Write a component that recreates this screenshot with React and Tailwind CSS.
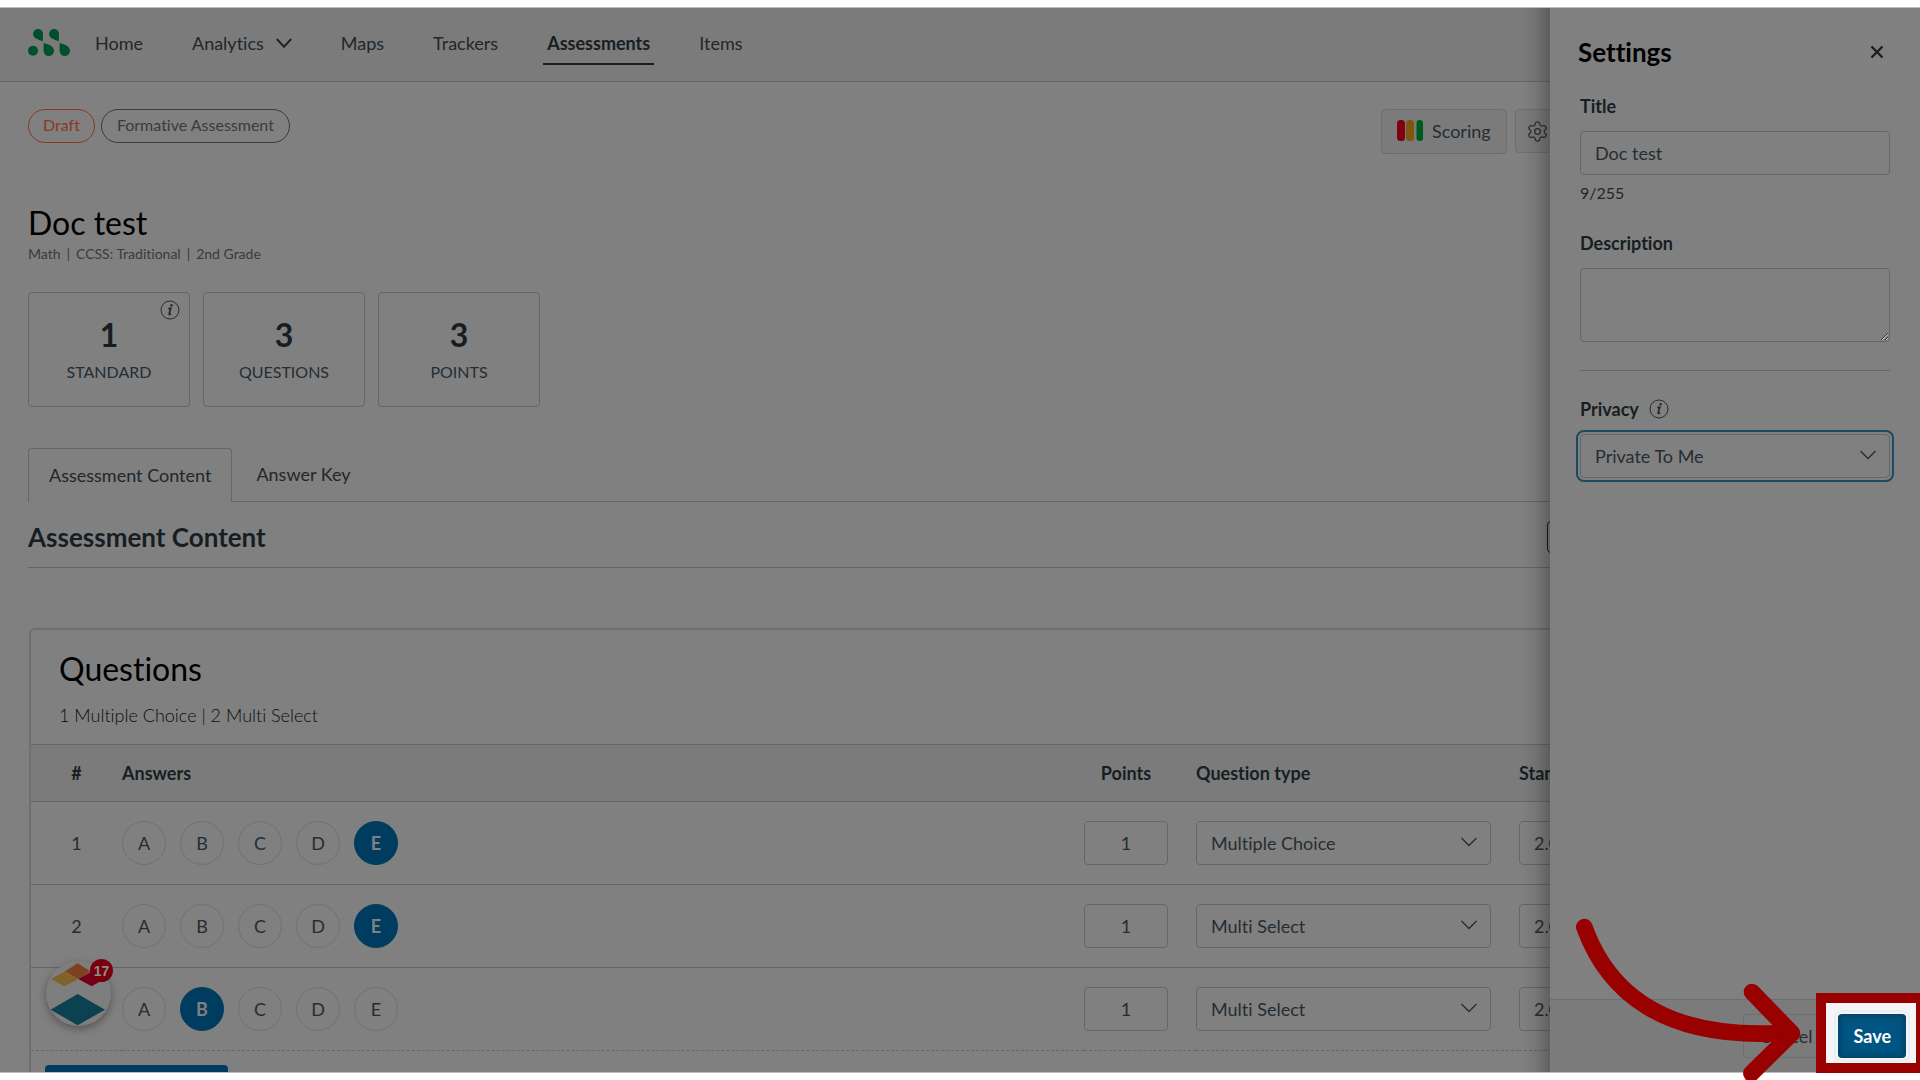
import React from 'react';
import { Settings as Gear } from 'lucide-react';

const questions = [
  { id: 1, type: 'Multiple Choice', answer: 'E' },
  { id: 2, type: 'Multi Select', answer: 'E' },
  { id: 3, type: 'Multi Select', answer: 'B' },
];

const stats = [
  { value: 1, label: 'STANDARD', info: true },
  { value: 3, label: 'QUESTIONS' },
  { value: 3, label: 'POINTS' },
];

// Drops arranged in two rows, the last one on the left is round
const Logo = () => (
  <svg viewBox="0 0 42 27" className="w-[42px] h-[27px]" fill="#00502c">
    <path d="M15 12.200C11 11 5 9.500 5 5a5 5 0 0 1 10 0z" />
    <path d="M31 12.200C27 11 21 9.500 21 5a5 5 0 0 1 10 0z" />
    <circle cx="5" cy="21.800" r="5" />
    <path d="M15.600 13.800C20 15.500 26 17 26 21.800a5.200 5.200 0 0 1-10.400 0z" />
    <path d="M31.600 13.800C36 15.500 42 17 42 21.800a5.200 5.200 0 0 1-10.400 0z" />
  </svg>
);

const InfoIcon = () => (
  <svg viewBox="0 0 20 20" className="size-5" fill="none" stroke="#252d33">
    <circle cx="10" cy="10" r="9" strokeWidth="1" />
    <path d="M8.300 8.600 10.700 8.100 9.100 14.200Q9.200 15 11 13.600" strokeWidth="1.800" />
    <circle cx="11.600" cy="5.200" r="1.300" fill="#252d33" stroke="none" />
  </svg>
);

const SelectBox = ({ id, label, value, focused }) => (
  <div className="relative">
    <select
      id={id}
      aria-label={label}
      defaultValue={value}
      className={`block w-full h-11 appearance-none rounded border border-[#646769] bg-transparent pl-3.5 pr-10 text-lg text-[#252d33] ${
        focused ? 'outline-2 outline-offset-2 outline-[#1d4a62]' : ''
      }`}
    >
      <option>{value}</option>
    </select>
    <svg
      viewBox="0 0 16 10"
      className="absolute right-3.5 top-4 w-4 h-2.5 pointer-events-none"
      fill="none"
      stroke="#252d33"
      strokeWidth="1.300"
    >
      <path d="M0.500 1 8 8.500 15.500 1" />
    </svg>
  </div>
);

const TopNav = () => (
  <header className="flex items-center h-[74px] pl-7 pb-1 border-b border-[#646769] bg-[#7b7b7b] text-lg text-[#20272c]">
    <a href="#" aria-label="Main page">
      <Logo />
    </a>
    <nav className="flex items-center ml-[25px] gap-[49px] whitespace-nowrap">
      <a href="#">Home</a>
      <a href="#" className="flex items-center gap-3">
        Analytics
        <svg viewBox="0 0 16 10" className="w-4 h-2.5" fill="none" stroke="#20272c" strokeWidth="2">
          <path d="M0.800 1 8 8.800 15.200 1" />
        </svg>
      </a>
      <a href="#">Maps</a>
      <a href="#">Trackers</a>
      <a href="#" className="relative font-bold text-[#171e23]">
        Assessments
        <span className="absolute -inset-x-1 -bottom-2 h-0.5 bg-[#171e23]" />
      </a>
      <a href="#">Items</a>
    </nav>
  </header>
);

const AnswerChoices = ({ question }) => (
  <div className="flex gap-3.5">
    {['A', 'B', 'C', 'D', 'E'].map((letter) => (
      <button
        key={letter}
        className={`size-11 rounded-full border text-lg ${
          letter === question.answer
            ? 'bg-[#003c5f] border-[#003c5f] text-[#808080] font-bold'
            : 'border-[#6f7173] text-[#252d33]'
        }`}
      >
        {letter}
      </button>
    ))}
  </div>
);

const QuestionsPanel = () => (
  <section className="mt-[60px] mx-px border-2 border-[#6d6f70] rounded-t-md">
    <div className="pt-[19px] pl-7 pb-[17px]">
      <h3 className="text-[32px] leading-10 text-black">Questions</h3>
      <p className="mt-3.5 text-lg leading-6 font-light text-[#0c0c0c]">1 Multiple Choice | 2 Multi Select</p>
    </div>
    <table className="w-full table-fixed text-lg text-[#252d33]">
      <thead>
        <tr className="h-[57px] bg-[#7b7b7b] border-y border-[#646769] text-left text-[#171e23]">
          <th className="w-[91px] text-center">#</th>
          <th>Answers</th>
          <th className="w-28 pr-7 text-center">Points</th>
          <th className="w-[323px]">Question type</th>
          <th className="w-[370px]">Standards</th>
        </tr>
      </thead>
      <tbody>
        {questions.map((q) => (
          <tr key={q.id} className="h-[83px] border-b border-[#646769] last:border-dashed">
            <td className="text-center">{q.id}</td>
            <td>
              <AnswerChoices question={q} />
            </td>
            <td className="pr-7">
              <input
                aria-label={`Points for question ${q.id}`}
                defaultValue="1"
                className="block w-full h-11 rounded border border-[#646769] text-center"
              />
            </td>
            <td className="pr-7">
              <SelectBox label={`Type of question ${q.id}`} value={q.type} />
            </td>
            <td className="pr-7">
              <input
                aria-label={`Standard for question ${q.id}`}
                defaultValue="2.OA.A.1"
                className="block w-full h-11 rounded border border-[#646769] px-3.5"
              />
            </td>
          </tr>
        ))}
      </tbody>
    </table>
    <button aria-label="Add questions" className="block mt-3.5 ml-3.5 w-[183px] h-11 rounded bg-[#003c5f]" />
  </section>
);

const AssessmentPage = () => (
  <div className="h-full overflow-hidden">
    <TopNav />
    <main className="px-7 pt-[27px]">
      <div className="flex items-start justify-between h-[45px]">
        <div className="flex gap-1.5 text-base">
          <span className="flex items-center h-[34px] px-3.5 pb-0.5 rounded-full border border-[#8a3a20] text-[#8a3a20]">Draft</span>
          <span className="flex items-center h-[34px] px-[15px] pb-0.5 rounded-full border border-[#353c42] text-[#353c42]">
            Formative Assessment
          </span>
        </div>
        <div className="flex gap-2 w-[511px] text-lg text-[#252d33]">
          <button className="flex items-center gap-[9px] h-[45px] px-[15px] pb-0.5 rounded border border-[#6c6e70] bg-[#7b7b7b]">
            <svg viewBox="0 0 26 21" className="w-[26px] h-[21px]">
              <rect width="8" height="21" rx="3.500" fill="#80000f" />
              <rect x="9" width="8" height="21" rx="3.500" fill="#80560f" />
              <rect x="19.500" width="6.500" height="21" rx="3" fill="#005a1c" />
            </svg>
            Scoring
          </button>
          <button aria-label="Options" className="flex items-center h-11 px-2.5 rounded border border-[#6c6e70] bg-[#7b7b7b]">
            <Gear size={23} strokeWidth={1.3} />
          </button>
        </div>
      </div>

      <h1 className="mt-[49px] text-[32px] leading-10 text-black">Doc test</h1>
      <div className="flex gap-1.5 mt-px text-sm leading-5 text-[#353c42]">
        <span>Math</span>
        <span>|</span>
        <span>CCSS: Traditional</span>
        <span>|</span>
        <span>2nd Grade</span>
      </div>

      <div className="flex gap-[13px] mt-7">
        {stats.map((s) => (
          <div
            key={s.label}
            className="relative flex flex-col items-center w-[162px] h-[115px] pt-[22px] rounded border border-[#646769] text-[#252d33]"
          >
            {s.info && (
              <span className="absolute top-[7px] right-[9px]">
                <InfoIcon />
              </span>
            )}
            <strong className="text-[32px] leading-10 text-[#171e23]">{s.value}</strong>
            <span className="mt-[5px] text-base leading-6">{s.label}</span>
          </div>
        ))}
      </div>

      <div role="tablist" className="flex mt-[41px] text-lg text-[#20272c]">
        <button role="tab" aria-selected="true" className="h-[54px] px-5 pb-0.5 border border-b-0 border-[#646769] rounded-t">
          Assessment Content
        </button>
        <button role="tab" aria-selected="false" className="h-[54px] pl-6 pb-px border-b border-[#646769]">
          Answer Key
        </button>
        <div className="flex-1 border-b border-[#646769]" />
      </div>

      <div className="flex items-center justify-between mt-[19px] pb-3.5 border-b border-[#646769]">
        <h2 className="text-[26px] leading-8 font-bold text-[#171e23]">Assessment Content</h2>
        <button aria-label="Edit content" className="w-[345px] h-8 rounded border border-[#171e23]" />
      </div>

      <QuestionsPanel />
    </main>

    {/* Help launcher */}
    <button aria-label="Help" className="absolute left-[46px] bottom-[46px] size-[65px] rounded-full bg-[#7e7e7e] shadow-[0_3px_8px_rgba(0,0,0,0.35)]">
      <svg viewBox="0 0 195 195" className="size-full">
        <path d="M95 7 133 31 97 54 57 31z" fill="#80401f" />
        <path d="M57 31 97 54 55 76 15 54z" fill="#80632a" />
        <path d="M97 54 135 32 176 54 137 76z" fill="#74001c" />
        <path d="M95 99 177 146 95 193 14 146z" fill="#0c4250" />
      </svg>
      <span className="absolute -top-0.5 -right-0.5 flex items-center justify-center size-[23px] rounded-full bg-[#78000e] font-['Liberation_Sans'] text-sm font-bold text-[#8c8c8c]">
        17
      </span>
    </button>

    {/* Shade cast on the page by the drawer */}
    <div className="absolute inset-y-0 right-[370px] w-7 bg-linear-to-l from-black/25 via-black/8 to-transparent" />
  </div>
);

const SettingsDrawer = () => (
  <aside className="absolute inset-y-0 right-0 flex flex-col w-[370px] bg-[#808080] text-lg text-[#171e23]">
    <div className="flex items-center justify-between pt-7 pl-7 pr-9">
      <h2 className="text-[26px] leading-8 font-bold text-black">Settings</h2>
      <button aria-label="Close">
        <svg viewBox="0 0 14 14" className="size-3.5" stroke="#171e23" strokeWidth="2.400">
          <path d="M1.500 1.500 12.500 12.500M12.500 1.500 1.500 12.500" />
        </svg>
      </button>
    </div>
    <form className="flex flex-col px-[30px] pt-[26px]">
      <label htmlFor="title" className="leading-6 font-bold">Title</label>
      <input
        id="title"
        defaultValue="Doc test"
        className="mt-[13px] h-11 px-3.5 rounded border border-[#646769] text-[#252d33]"
      />
      <span className="mt-1.5 text-base leading-6 text-[#20272c]">9/255</span>
      <label htmlFor="description" className="mt-[26px] leading-6 font-bold">Description</label>
      <textarea id="description" className="mt-[13px] h-[74px] rounded border border-[#646769]" />
      <hr className="mt-7 border-[#646769]" />
      <div className="flex items-center gap-2.5 mt-[26px] mb-[13px] leading-6">
        <label htmlFor="privacy" className="font-bold">Privacy</label>
        <InfoIcon />
      </div>
      <SelectBox id="privacy" value="Private To Me" focused />
    </form>
    <footer className="flex items-start justify-end gap-2.5 h-[73px] mt-auto pt-3.5 pr-3.5 border-t border-[#6c6e70] bg-[#7b7b7b]">
      <button className="h-11 px-[15px] rounded border border-[#6c6e70] text-[#252d33]">Cancel</button>
      <div className="relative">
        <span className="absolute -left-[22px] -right-5 -top-[21px] -bottom-[15px] border-10 border-[#990000] bg-[#f5f5f5]" />
        <button className="relative block h-11 px-[15px] rounded bg-[#005582] font-bold text-white outline-2 outline-offset-2 outline-[#e9eef2] shadow-[inset_0_0_8px_rgba(0,0,0,0.35)]">
          Save
        </button>
      </div>
    </footer>
  </aside>
);

// Arrow that leads the eye to the Save button
const PointerArrow = () => (
  <svg
    viewBox="165 114 678 486"
    className="absolute right-[119px] bottom-0 w-[226px] h-[162px] pointer-events-none"
    fill="none"
    stroke="#990000"
    strokeWidth="50"
    strokeLinecap="round"
    strokeLinejoin="round"
  >
    <path d="M193 141C260 328 424 484 800 458" />
    <path d="M696 336 816 460 694 580" />
  </svg>
);

const App = () => (
  <div className="relative h-screen overflow-hidden bg-white py-[7px] font-[Lato,'Liberation_Sans',sans-serif] [font-variant-ligatures:none]">
    <div className="relative h-full bg-[#808080] border-y border-[#bdbdbd]">
      <AssessmentPage />
      <SettingsDrawer />
    </div>
    <PointerArrow />
  </div>
);

export default App;
